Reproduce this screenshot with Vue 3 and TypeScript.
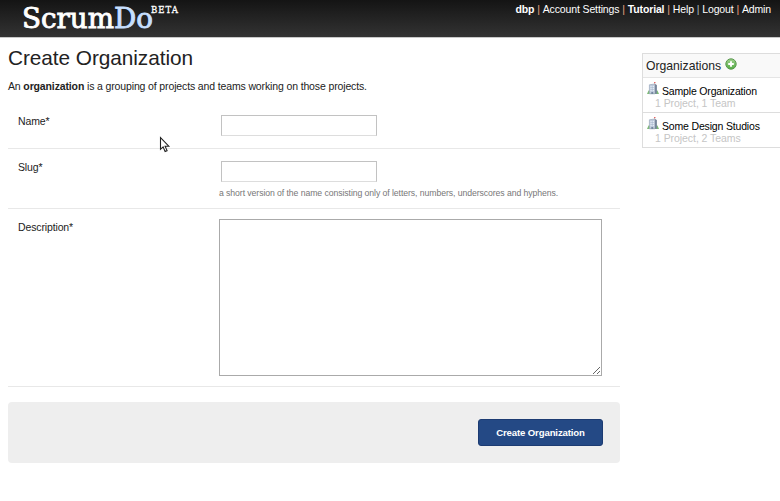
<script setup lang="ts">
import { ref } from 'vue'

interface NavLink { label: string; strong?: boolean }
interface Organization { name: string; summary: string }

const links: NavLink[] = [
  { label: 'dbp', strong: true },
  { label: 'Account Settings' },
  { label: 'Tutorial', strong: true },
  { label: 'Help' },
  { label: 'Logout' },
  { label: 'Admin' },
]
const organizations: Organization[] = [
  { name: 'Sample Organization', summary: '1 Project, 1 Team' },
  { name: 'Some Design Studios', summary: '1 Project, 2 Teams' },
]
const name = ref('')
const slug = ref('')
const description = ref('')
</script>

<template>
  <div class="page">
    <header class="topbar">
      <svg class="logo" width="190" height="37" role="img" aria-label="ScrumDo BETA">
        <text class="brand" x="22" y="27.7" textLength="131" lengthAdjust="spacingAndGlyphs">Scrum<tspan class="brand-do">Do</tspan></text>
        <text class="beta" x="151" y="13" textLength="27">BETA</text>
      </svg>
      <nav class="nav">
        <template v-for="(link, i) in links" :key="link.label">
          <span v-if="i > 0" class="bar" :class="{ pale: i === 4 }">|</span>
          <a :class="{ strong: link.strong }">{{ link.label }}</a>
        </template>
      </nav>
    </header>

    <div class="body">
      <main class="main">
        <h1>Create Organization</h1>
        <p class="intro">An <b>organization</b> is a grouping of projects and teams working on those projects.</p>
        <form @submit.prevent>
          <div class="row row-name">
            <label for="name">Name*</label>
            <div class="field"><input id="name" v-model="name" type="text"></div>
          </div>
          <div class="row row-slug">
            <label for="slug">Slug*</label>
            <div class="field">
              <input id="slug" v-model="slug" type="text">
              <p class="hint">a short version of the name consisting only of letters, numbers, underscores and hyphens.</p>
            </div>
          </div>
          <div class="row row-desc">
            <label for="description">Description*</label>
            <div class="field"><textarea id="description" v-model="description"></textarea></div>
          </div>
          <div class="actions"><button type="submit">Create Organization</button></div>
        </form>
      </main>

      <aside class="side">
        <h2>
          <span>Organizations</span>
          <svg width="12" height="12" viewBox="0 0 12 12">
            <defs>
              <linearGradient id="add" x1="0" y1="0" x2="0" y2="1">
                <stop offset="0" stop-color="#9fd08d" /><stop offset="1" stop-color="#55ad45" />
              </linearGradient>
            </defs>
            <circle cx="6" cy="6" r="5.2" fill="url(#add)" stroke="#5b9a50" stroke-width="1" />
            <path d="M6 3.2v5.6M3.2 6h5.6" stroke="#fff" stroke-width="1.9" />
          </svg>
        </h2>
        <div v-for="org in organizations" :key="org.name" class="org">
          <div class="org-title">
            <svg width="12" height="13" viewBox="0 0 12 13">
              <path d="M0 12L1.5 8.5h9L12 12z" fill="#7cba74" />
              <path d="M2.4 2.8L8 2v9.8H2.4z" fill="#c3cede" stroke="#9aa8bb" stroke-width=".7" />
              <path d="M8 2l1.9 1v8.8H8z" fill="#77869b" />
              <path d="M3.5 4.5h3.5M3.5 6.5h3.5M3.5 8.5h3.5" stroke="#e8eff8" stroke-width=".9" />
              <path d="M5.2 3.5v6" stroke="#9aadc8" stroke-width=".6" />
              <path d="M7.7 2.5V.6" stroke="#b99a9e" stroke-width=".8" />
              <path d="M7.2.5h1.2" stroke="#e34b4b" />
              <path d="M4.3 10h1.9v2H4.3z" fill="#7587a0" />
            </svg>
            <a>{{ org.name }}</a>
          </div>
          <div class="summary">{{ org.summary }}</div>
        </div>
      </aside>
    </div>

    <svg class="cursor" width="12" height="18" viewBox="0 0 12 18">
      <path d="M1.5 1.5v11.8l2.6-2.4 2 4.6 2-.9-2-4.4h3.7z" fill="#fff" stroke="#222" stroke-width="1.1" />
    </svg>
  </div>
</template>

<style>
body { background: #fff; }
</style>

<style scoped>
.page { position: relative; width: 780px; height: 501px; overflow: hidden; box-sizing: border-box; font: 10.5px/15px "Liberation Sans", Arial, sans-serif; letter-spacing: -0.135px; color: #222; }
.topbar { display: flex; justify-content: space-between; height: 37px; border-bottom: 1px solid #c8c8c8; background: linear-gradient(#141414, #333); }
.logo { display: block; letter-spacing: 0; }
.brand { font: 27px "DejaVu Serif Condensed", "DejaVu Serif", serif; fill: #fff; stroke: #fff; stroke-width: .8px; }
.brand-do { fill: #c6dfff; stroke: #c6dfff; }
.beta { font: 9.5px "DejaVu Serif Condensed", "DejaVu Serif", serif; fill: #fff; stroke: #fff; stroke-width: .3px; }
.nav { display: flex; gap: 2.9px; padding: 2px 9px 0 0; color: #fff; white-space: nowrap; }
.strong { font-weight: bold; }
.bar { color: #e9a080; }
.bar.pale { color: #a9b8c6; }
.body { display: flex; justify-content: space-between; }
.main { width: 612px; padding-left: 8px; }
h1 { margin: 7px 0 0; font-size: 20.8px; line-height: 26px; font-weight: normal; letter-spacing: -0.06px; }
.intro { margin: 8px 0 0; }
form { margin-top: 9px; }
.row { display: flex; box-sizing: border-box; border-bottom: 1px solid #e8e8e8; padding: 10px 10px 0; }
.row label { width: 201px; line-height: 16px; }
.row-name { height: 46px; }
.row-slug { height: 60px; }
.row-desc { height: 178px; }
input { display: block; box-sizing: border-box; width: 156px; height: 21px; margin: 2px 0 0 2px; padding: 0 3px; border: 1px solid #c2c2c2; border-bottom-color: #ddd; border-radius: 0; background: #fff; font: inherit; outline: none; }
.hint { margin: 5px 0 0; font-size: 8.7px; line-height: 12px; letter-spacing: -0.08px; color: #777; white-space: nowrap; }
textarea { display: block; box-sizing: border-box; width: 383px; height: 157px; margin: 0; padding: 2px; border: 1px solid #aaa; border-radius: 0; outline: none; font: inherit; }
.actions { display: flex; justify-content: flex-end; box-sizing: border-box; height: 61px; margin-top: 15px; padding: 17px 17px 0 0; border-radius: 4px; background: #eee; }
button { width: 125px; height: 27px; padding: 0; border: 1px solid #1c3b72; border-radius: 3px; background: #244985; color: #fff; font: bold 9.6px "Liberation Sans", Arial, sans-serif; letter-spacing: -0.13px; }
.side { width: 138px; height: 95px; margin-top: 15px; box-sizing: border-box; border: 1px solid #ddd; border-right: 0; }
h2 { display: flex; align-items: flex-start; gap: 4px; box-sizing: border-box; height: 24px; margin: 0; padding: 4px 0 0 3px; background: #f9f9f9; border-bottom: 1px solid #e5e5e5; font-size: 12.2px; line-height: 16px; font-weight: normal; letter-spacing: 0; }
.org { box-sizing: border-box; height: 35px; border-bottom: 1px solid #ddd; }
.org:last-child { border-bottom: 0; }
.org-title { display: flex; gap: 3px; padding: 4px 0 0 4px; height: 15px; color: #000; line-height: 18px; letter-spacing: -0.17px; white-space: nowrap; }
.summary { padding-left: 12px; line-height: 12px; letter-spacing: -0.06px; color: #c5c5c5; }
.cursor { position: absolute; left: 159px; top: 136px; }
</style>
